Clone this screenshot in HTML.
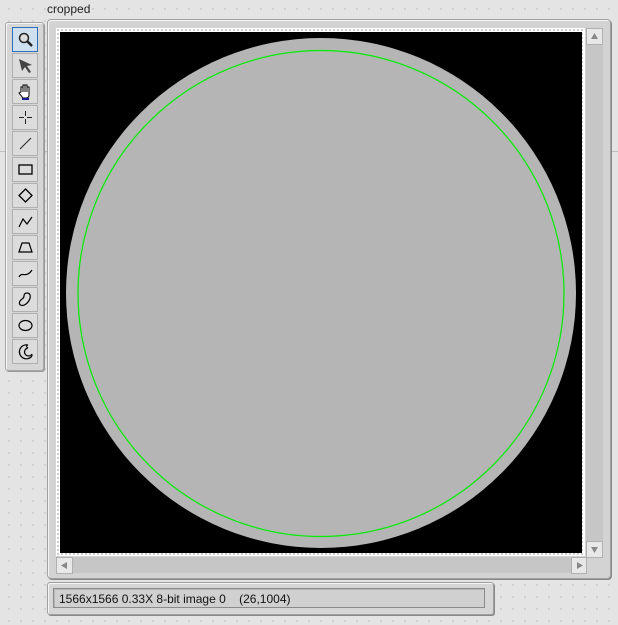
<!DOCTYPE html>
<html><head><style>
body{margin:0;width:618px;height:625px;background:#e4e4e4;position:relative;overflow:hidden;font-family:"Liberation Sans",sans-serif;
background-image:radial-gradient(#cfcfcf 1px,transparent 1.2px);background-size:12px 12px;background-position:3px 3px}
.a{position:absolute}
.btn{position:absolute;left:12px;width:24px;height:23px;border:1px solid #b0b0b0;background:#dcdcdc;box-sizing:content-box}
.btn svg{position:absolute;left:4px;top:3px}
</style></head><body>
<div class="a" style="left:0;top:151px;width:618px;height:1px;background:#bdbdbd"></div>
<div class="a" style="left:47px;top:2px;font-size:12px;color:#222">cropped</div>
<!-- toolbar -->
<div class="a" style="left:5px;top:22px;width:37px;height:347px;background:#d6d6d6;border:1px solid #a8a8a8;border-radius:3px;box-shadow:1px 1px 0 #999, inset 1px 1px 0 #f4f4f4"></div>
<div class="btn" style="top:27px;border-color:#2c6fb8;background:#cfe0f0"><svg width="17" height="17"><circle cx="7" cy="7" r="4.5" fill="#ddd" stroke="#222" stroke-width="1.5"/><line x1="10" y1="10" x2="15" y2="15" stroke="#222" stroke-width="2.5"/></svg></div>
<div class="btn" style="top:53px"><svg width="17" height="17"><path d="M2 2 L15 8 L10 9 L14 15 L12 16 L8 10 L5 14 Z" fill="#444"/></svg></div>
<div class="btn" style="top:79px"><svg width="17" height="17"><path d="M4 9 V4 h2 v5 V2 h2 v7 V2 h2 v7 V4 h2 v8 q0 3-3 3 h-3 l-4-5 2-1z" fill="#fff" stroke="#000"/><rect x="5" y="15" width="7" height="2" fill="#1a1a9a"/></svg></div>
<div class="btn" style="top:105px"><svg width="17" height="17"><path d="M8.5 2v5M8.5 10v5M2 8.5h5M10 8.5h5" stroke="#222"/></svg></div>
<div class="btn" style="top:131px"><svg width="17" height="17"><line x1="3" y1="14" x2="14" y2="3" stroke="#222"/></svg></div>
<div class="btn" style="top:157px"><svg width="17" height="17"><rect x="2" y="4" width="13" height="9" fill="none" stroke="#000" stroke-width="1.3"/></svg></div>
<div class="btn" style="top:183px"><svg width="17" height="17"><path d="M8.5 2 L15 8.5 L8.5 15 L2 8.5Z" fill="none" stroke="#000" stroke-width="1.3"/></svg></div>
<div class="btn" style="top:209px"><svg width="17" height="17"><path d="M2 14 L6 6 L10 11 L15 4" fill="none" stroke="#000" stroke-width="1.2"/></svg></div>
<div class="btn" style="top:235px"><svg width="17" height="17"><path d="M2 13 L5 4 H12 L15 13Z" fill="none" stroke="#000" stroke-width="1.2"/></svg></div>
<div class="btn" style="top:261px"><svg width="17" height="17"><path d="M2 12 C5 6,9 14,15 5" fill="none" stroke="#000" stroke-width="1.2"/></svg></div>
<div class="btn" style="top:287px"><svg width="17" height="17"><path d="M10 2 C15 2,14 9,9 13 C5 16,1 14,3 10 C5 7,7 8,7 5 C7 3,8 2,10 2Z" fill="none" stroke="#000" stroke-width="1.2"/></svg></div>
<div class="btn" style="top:313px"><svg width="17" height="17"><ellipse cx="8.5" cy="8.5" rx="6.5" ry="5" fill="none" stroke="#000" stroke-width="1.2"/></svg></div>
<div class="btn" style="top:339px"><svg width="17" height="17"><path d="M11 2 A7 7 0 1 0 15 13 M11 5 A4 4 0 1 0 15 11" fill="none" stroke="#000" stroke-width="1.2"/><path d="M11 2 Q8 3 11 5 M15 13 L15 11" stroke="#000" fill="none"/></svg></div>
<!-- main frame -->
<div class="a" style="left:47px;top:19px;width:562px;height:558px;background:#d3d3d3;border:1px solid #a0a0a0;border-radius:4px;box-shadow:1px 1px 0 #888, inset 1px 1px 0 #f4f4f4"></div>
<div class="a" style="left:56px;top:28px;width:529px;height:528px;background:#fff;background-image:radial-gradient(#bbb 0.8px,transparent 1px);background-size:4px 4px"></div>
<div class="a" style="left:60px;top:32px;width:522px;height:521px;background:#000;overflow:hidden">
<svg width="522" height="521" style="position:absolute;left:0;top:0"><circle cx="261" cy="261" r="255" fill="#b5b5b5"/><circle cx="261" cy="261.5" r="243" fill="none" stroke="#00ee00" stroke-width="1.2"/></svg></div>
<div class="a" style="left:586px;top:28px;width:17px;height:528px;background:#c6c6c6"></div>
<div class="a" style="left:586px;top:28px;width:15px;height:15px;background:#e8e8e8;border:1px solid #b0b0b0"><svg width="15" height="15"><path d="M4 10 L7.5 4 L11 10Z" fill="#888"/></svg></div>
<div class="a" style="left:586px;top:541px;width:15px;height:15px;background:#e8e8e8;border:1px solid #b0b0b0"><svg width="15" height="15"><path d="M4 5 L11 5 L7.5 11Z" fill="#888"/></svg></div>
<div class="a" style="left:56px;top:557px;width:529px;height:16px;background:#c6c6c6"></div>
<div class="a" style="left:56px;top:557px;width:15px;height:15px;background:#e8e8e8;border:1px solid #b0b0b0"><svg width="15" height="15"><path d="M10 4 L10 11 L4 7.5Z" fill="#888"/></svg></div>
<div class="a" style="left:571px;top:557px;width:14px;height:15px;background:#e8e8e8;border:1px solid #b0b0b0"><svg width="15" height="15"><path d="M5 4 L5 11 L11 7.5Z" fill="#888"/></svg></div>
<!-- status -->
<div class="a" style="left:47px;top:582px;width:445px;height:31px;background:#d6d6d6;border:1px solid #a0a0a0;border-radius:3px;box-shadow:1px 1px 0 #888, inset 1px 1px 0 #f4f4f4"></div>
<div class="a" style="left:53px;top:588px;width:432px;height:20px;background:#d0d0d0;border:1px solid #8a8a8a;box-shadow:inset 1px 1px 0 #b8b8b8;font-size:12px;line-height:20px;color:#111;padding-left:5px;box-sizing:border-box">1566x1566 0.33X 8-bit image 0&nbsp;&nbsp;&nbsp;&nbsp;(26,1004)</div>
</body></html>
